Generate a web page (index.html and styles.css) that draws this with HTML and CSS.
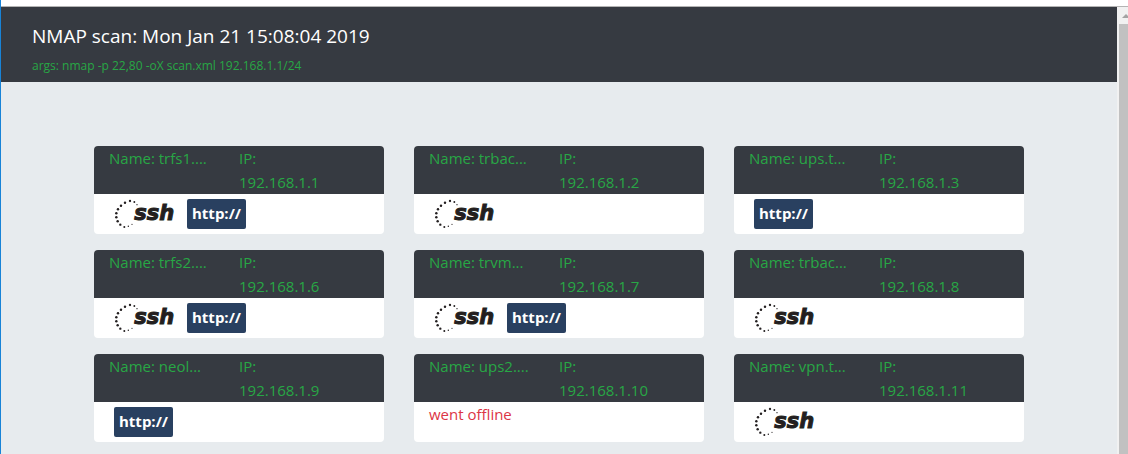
FILE: index.html
```
<!DOCTYPE html>
<html lang="en">
<head>
<meta charset="utf-8">
<title>NMAP scan</title>
<link rel="stylesheet" href="styles.css">
</head>
<body>
<div class="topline"></div>
<div class="viewport">
  <div class="page">
    <header class="header">
      <h1 class="title">NMAP scan: Mon Jan 21 15:08:04 2019</h1>
      <p class="args">args: nmap -p 22,80 -oX scan.xml 192.168.1.1/24</p>
    </header>
    <main class="hosts">
      <article class="card"><div class="card-head"><span class="name">Name: trfs1....</span><span>IP: 192.168.1.1</span></div><div class="card-body"><a class="ssh" href="#" aria-label="ssh"><svg viewBox="0 0 192 90">
        <g id="ssh" fill="#231f20">
          <circle cx="69" cy="17" r="2"/><circle cx="61" cy="9" r="2.8"/><circle cx="48" cy="6" r="3.5"/>
          <circle cx="33" cy="11" r="3.7"/><circle cx="21" cy="20" r="3.7"/><circle cx="12" cy="31" r="3.7"/>
          <circle cx="7" cy="43" r="3.7"/><circle cx="7" cy="55" r="3.7"/><circle cx="11" cy="67" r="3.7"/>
          <circle cx="19" cy="77" r="3.5"/><circle cx="31" cy="84" r="3"/><circle cx="43" cy="82" r="2.2"/><circle cx="54" cy="76" r="1.8"/>
          <text class="ssh-word" x="61" y="63">ssh</text>
        </g></svg></a><a class="http" href="#">http://</a></div></article>
      <article class="card"><div class="card-head"><span class="name">Name: trbac...</span><span>IP: 192.168.1.2</span></div><div class="card-body"><a class="ssh" href="#" aria-label="ssh"><svg viewBox="0 0 192 90"><use href="#ssh"/></svg></a></div></article>
      <article class="card"><div class="card-head"><span class="name">Name: ups.t...</span><span>IP: 192.168.1.3</span></div><div class="card-body"><a class="http" href="#">http://</a></div></article>
      <article class="card"><div class="card-head"><span class="name">Name: trfs2....</span><span>IP: 192.168.1.6</span></div><div class="card-body"><a class="ssh" href="#" aria-label="ssh"><svg viewBox="0 0 192 90"><use href="#ssh"/></svg></a><a class="http" href="#">http://</a></div></article>
      <article class="card"><div class="card-head"><span class="name">Name: trvm...</span><span>IP: 192.168.1.7</span></div><div class="card-body"><a class="ssh" href="#" aria-label="ssh"><svg viewBox="0 0 192 90"><use href="#ssh"/></svg></a><a class="http" href="#">http://</a></div></article>
      <article class="card"><div class="card-head"><span class="name">Name: trbac...</span><span>IP: 192.168.1.8</span></div><div class="card-body"><a class="ssh" href="#" aria-label="ssh"><svg viewBox="0 0 192 90"><use href="#ssh"/></svg></a></div></article>
      <article class="card"><div class="card-head"><span class="name">Name: neol...</span><span>IP: 192.168.1.9</span></div><div class="card-body"><a class="http" href="#">http://</a></div></article>
      <article class="card"><div class="card-head"><span class="name">Name: ups2....</span><span>IP: 192.168.1.10</span></div><div class="card-body offline">went offline</div></article>
      <article class="card"><div class="card-head"><span class="name">Name: vpn.t...</span><span>IP: 192.168.1.11</span></div><div class="card-body"><a class="ssh" href="#" aria-label="ssh"><svg viewBox="0 0 192 90"><use href="#ssh"/></svg></a></div></article>
    </main>
  </div>
  <div class="scrollbar" aria-hidden="true">
    <svg class="arrow" viewBox="0 0 6 17"><path d="M0 11 4 7 8 11Z" fill="#a3a3a3"/></svg>
    <div class="thumb"></div>
  </div>
</div>
</body>
</html>
```
FILE: styles.css
```
* { box-sizing: border-box; }
body {
  margin: 0;
  min-height: 100vh;
  display: flex;
  flex-direction: column;
  border-left: 1px solid #1883d7;
  background: #e9ecef;
  font: 15px/24px "Open Sans", "Noto Sans", sans-serif;
  color: #28a745;
}
.topline { height: 7px; background: #fff; border-bottom: 1px solid #b4b4b4; }
.viewport { flex: 1; display: flex; }
.page { flex: 1; background: #e7ebee; }
.header { background: #363a41; padding: 16px 31px 5px; }
.title { margin: 0 0 6px; font-size: 19px; line-height: 26px; font-weight: 400; color: #fff; }
.args { margin: 0; font-size: 12px; line-height: 22px; }
.hosts {
  max-width: 960px;
  margin: 0 auto;
  padding: 64px 15px 12px;
  display: grid;
  grid-template-columns: repeat(3, 1fr);
  gap: 16px 30px;
}
.card { border-radius: 4px; overflow: hidden; background: #fff; }
.card-head {
  display: grid;
  grid-template-columns: 1fr 1fr;
  padding: 0 15px;
  background: #363a41;
}
.card-head span { padding-right: 30px; }
.card-head .name { padding-right: 0; white-space: nowrap; }
.card-body { display: flex; gap: 9px; min-height: 40px; padding: 5px 20px; }
.card-body.offline { padding: 0 15px; color: #dc3545; }
.ssh, .ssh svg { display: block; width: 64px; height: 30px; }
.ssh-word {
  font: italic 700 63px "DejaVu Sans", sans-serif;
  stroke: #231f20;
  stroke-width: 3px;
}
.http {
  height: 30px;
  padding: 0 5px;
  border-radius: 2px;
  background: #294060;
  color: #fff;
  font-size: 15px;
  font-weight: 700;
  line-height: 28px;
  text-decoration: none;
}
.scrollbar {
  width: 11px;
  display: flex;
  flex-direction: column;
  align-items: flex-end;
  background: #f1f1f1;
}
.arrow { width: 6px; height: 17px; }
.thumb { flex: 1; width: 9px; background: #c1c1c1; }
```
